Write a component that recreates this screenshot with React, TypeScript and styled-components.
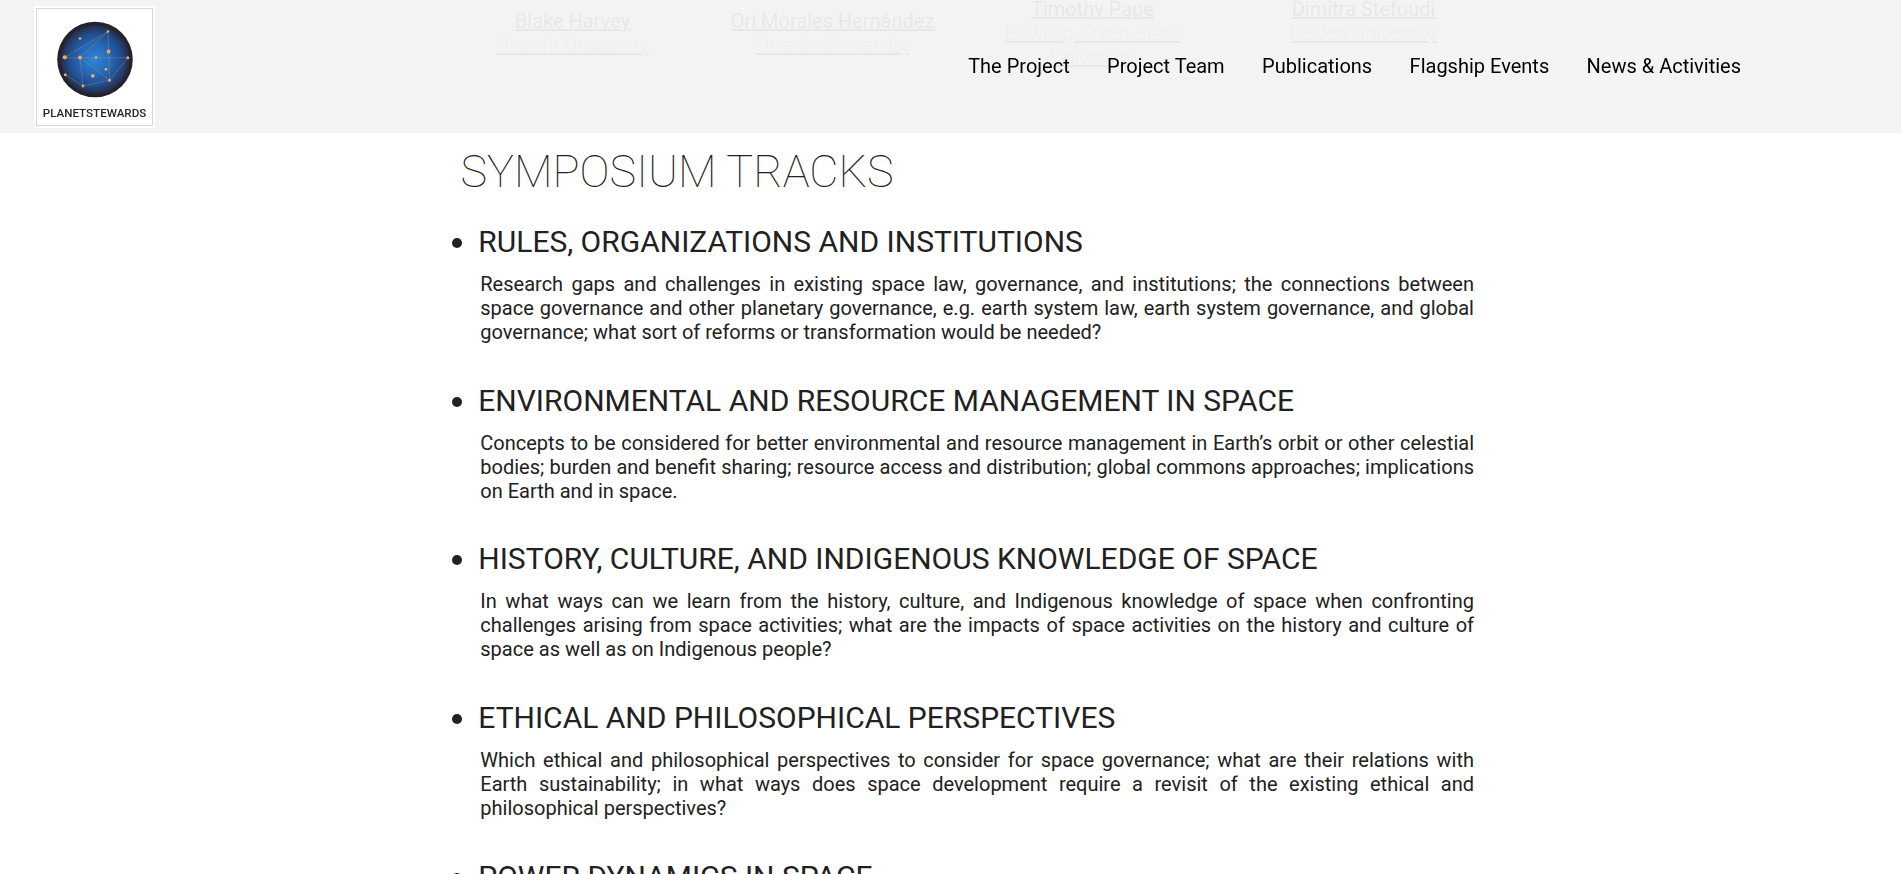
import styled, { createGlobalStyle } from 'styled-components';

interface Person {
  name: string;
  university: string[];
  raised?: boolean;
}

interface TrackProps {
  title: string;
  descript: string;
}

const menus = [
  'The Project',
  'Project Team',
  'Publications',
  'Flagship Events',
  'News & Activities',
];

const people: Person[] = [
  { name: 'Blake Harvey', university: ['Utrecht University'] },
  { name: 'Ori Morales Hernández', university: ['Utrecht University'] },
  {
    name: 'Timothy Pape',
    university: ['Bowling Green State', 'University'],
    raised: true,
  },
  { name: 'Dimitra Stefoudi', university: ['Leiden University'], raised: true },
];

const tracks: TrackProps[] = [
  {
    title: 'RULES, ORGANIZATIONS AND INSTITUTIONS',
    descript:
      'Research gaps and challenges in existing space law, governance, and institutions; the connections between space governance and other planetary governance, e.g. earth system law, earth system governance, and global governance; what sort of reforms or transformation would be needed?',
  },
  {
    title: 'ENVIRONMENTAL AND RESOURCE MANAGEMENT IN SPACE',
    descript:
      'Concepts to be considered for better environmental and resource management in Earth’s orbit or other celestial bodies; burden and benefit sharing; resource access and distribution; global commons approaches; implications on Earth and in space.',
  },
  {
    title: 'HISTORY, CULTURE, AND INDIGENOUS KNOWLEDGE OF SPACE',
    descript:
      'In what ways can we learn from the history, culture, and Indigenous knowledge of space when confronting challenges arising from space activities; what are the impacts of space activities on the history and culture of space as well as on Indigenous people?',
  },
  {
    title: 'ETHICAL AND PHILOSOPHICAL PERSPECTIVES',
    descript:
      'Which ethical and philosophical perspectives to consider for space governance; what are their relations with Earth sustainability; in what ways does space development require a revisit of the existing ethical and philosophical perspectives?',
  },
  { title: 'POWER DYNAMICS IN SPACE', descript: '' },
];

// x, y, radius
const stars = [
  [51, 20.5, 1.3],
  [23, 27.5, 1.3],
  [51.5, 40.5, 1.9],
  [7.8, 46.3, 2.1],
  [23, 46.5, 1.9],
  [39, 46.5, 1.3],
  [70.8, 46.8, 1.5],
  [49, 58.3, 1.4],
  [8.3, 63.8, 1.5],
  [35.8, 64.8, 1.9],
  [52.5, 69.2, 1.5],
  [26, 75, 1.4],
];

const Logo = () => (
  <LogoBox>
    <svg width="76" height="77" viewBox="0 10 76 77">
      <defs>
        <radialGradient id="globe">
          <stop offset="0" stopColor="#2f86d6" />
          <stop offset="0.4" stopColor="#2569b8" />
          <stop offset="0.7" stopColor="#214b8c" />
          <stop offset="0.86" stopColor="#253453" />
          <stop offset="0.94" stopColor="#23222d" />
          <stop offset="1" stopColor="#23222b" />
        </radialGradient>
      </defs>
      <circle cx="38" cy="48.5" r="37.8" fill="url(#globe)" />
      <path
        d="M7.8 46.3 51 20.5 23 46.5 26 75 52.5 69.2 70.8 46.8H7.8M51 20.5 52.5 69.2 23 46.5M8.3 63.8 26 75"
        fill="none"
        stroke="#8c9096"
        strokeWidth="0.6"
        opacity="0.75"
      />
      {stars.map(([x, y, r]) => (
        <circle key={`${x}-${y}`} cx={x} cy={y} r={r} fill="#efad5c" />
      ))}
    </svg>
    <span>PLANETSTEWARDS</span>
  </LogoBox>
);

const Track = ({ title, descript }: TrackProps) => (
  <TrackItem>
    <TrackTitle>{title}</TrackTitle>
    <Descript>{descript}</Descript>
  </TrackItem>
);

const App = () => {
  return (
    <>
      <GlobalStyle />
      <Header>
        <Logo />
        <Nav>
          {menus.map((menu) => (
            <a key={menu}>{menu}</a>
          ))}
        </Nav>
      </Header>
      <Main>
        <PeopleGrid>
          {people.map(({ name, university, raised }) => (
            <PersonCard key={name} $raised={raised}>
              <span className="name">{name}</span>
              {university.map((line) => (
                <span key={line}>{line}</span>
              ))}
            </PersonCard>
          ))}
        </PeopleGrid>
        <Title>SYMPOSIUM TRACKS</Title>
        <TrackList>
          {tracks.map((track) => (
            <Track key={track.title} {...track} />
          ))}
        </TrackList>
      </Main>
    </>
  );
};

const GlobalStyle = createGlobalStyle`
  * {
    box-sizing: border-box;
  }
  body {
    margin: 0;
    overflow: hidden;
    background: #fff;
    color: #212121;
    font-family: Roboto, sans-serif;
  }
`;

const Header = styled.header`
  position: fixed;
  top: 0;
  left: 0;
  z-index: 10;
  display: flex;
  justify-content: space-between;
  align-items: flex-start;
  width: 100%;
  height: 133px;
  padding: 6px 160px 0 34px;
  background: rgba(242, 242, 242, 0.95);
`;

const LogoBox = styled.div`
  display: flex;
  flex-direction: column;
  align-items: center;
  width: 121px;
  height: 122px;
  padding-top: 13px;
  background: #fff;
  border: 2px solid #fff;
  box-shadow: inset 0 0 0 1px #d3d7d8;
  span {
    margin-top: 8px;
    font-size: 11.6px;
    font-weight: 500;
    line-height: 14px;
    color: #26262b;
  }
`;

const Nav = styled.nav`
  display: flex;
  gap: 37.4px;
  padding-top: 48px;
  a {
    font-size: 20px;
    line-height: 24px;
    color: #000;
  }
`;

const Main = styled.main`
  width: 1063px;
  height: 874px;
  margin-left: 442.5px;
  overflow: hidden;
`;

const PeopleGrid = styled.div`
  display: grid;
  grid-template-columns: 260px 260px 260px 282px;
  height: 133px;
`;

const PersonCard = styled.div<{ $raised?: boolean }>`
  display: flex;
  flex-direction: column;
  align-items: center;
  margin-top: ${({ $raised }) => ($raised ? '-3px' : '9px')};
  font-size: 20px;
  font-weight: 100;
  line-height: 24px;
  span {
    text-decoration: underline;
  }
  .name {
    font-weight: 400;
  }
`;

const Title = styled.h2`
  margin: 12px 0 0 18px;
  font-size: 45px;
  font-weight: 100;
  line-height: 54px;
`;

const TrackList = styled.ul`
  margin: 23.95px 0 0;
  padding: 0 31.5px 0 35.8px;
`;

const TrackItem = styled.li`
  height: 158.7px;
  font-size: 30px;
  line-height: 37px;
  &::marker {
    font-size: 31px;
  }
`;

const TrackTitle = styled.h3`
  margin: 0;
  font-size: 30px;
  font-weight: 400;
  line-height: 37px;
`;

const Descript = styled.p`
  margin: 12px 0 0 2px;
  font-size: 20px;
  line-height: 24px;
  text-align: justify;
`;

export default App;
